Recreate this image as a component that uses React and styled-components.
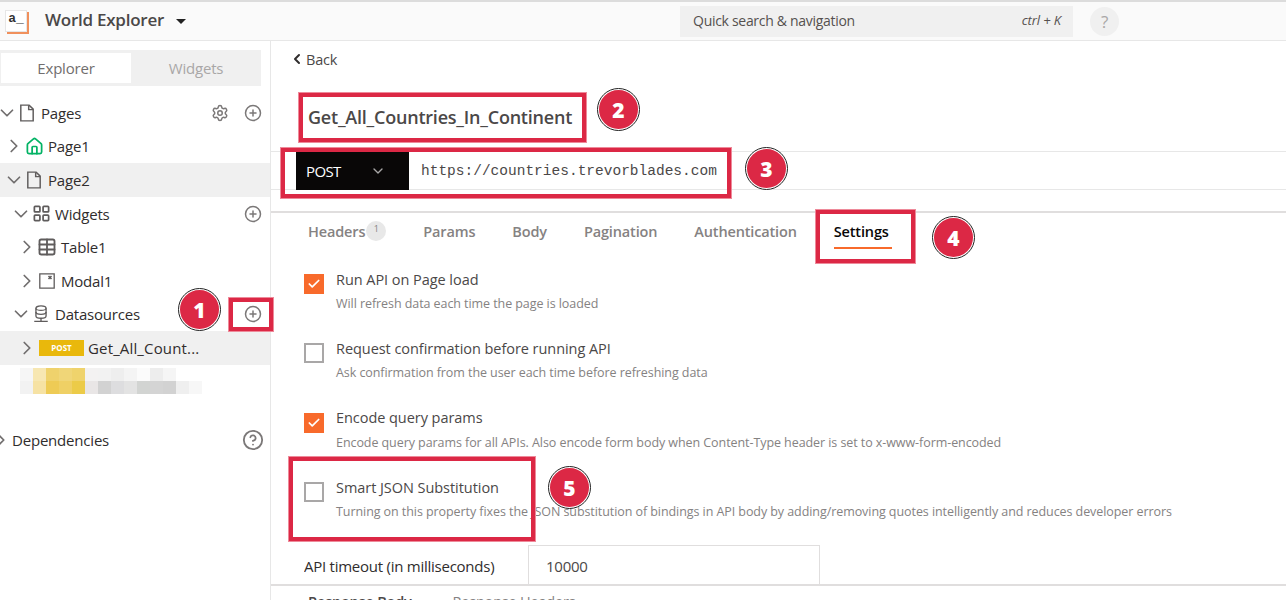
import React from 'react'
import styled, { createGlobalStyle } from 'styled-components'
import { ChevronDown, ChevronRight, ChevronLeft, CirclePlus, Settings as Gear, House, LayoutGrid, Table, CircleHelp, Check } from 'lucide-react'

const GlobalStyle = createGlobalStyle`
  html, body {
    margin: 0;
    height: 100%;
    overflow: hidden;
    background: #fff;
    font-family: 'Open Sans', sans-serif;
  }
`

const Page = styled.div`
  position: relative;
  width: 1286px;
  height: 600px;
  overflow: hidden;
  display: flex;
  flex-direction: column;
  border-top: 2px solid #dcdcdc;
  box-sizing: border-box;
`

// Top bar
const Header = styled.header`
  flex: none;
  height: 38px;
  box-sizing: content-box;
  display: flex;
  align-items: center;
  background: #fafafa;
  border-bottom: 1px solid #e7e7e7;
  padding-left: 5px;
`

const Logo = styled.div`
  width: 20px;
  height: 20px;
  background: #fff;
  border: 1px solid #e6e6e6;
  box-shadow: 2px 2px 0 #f0905c;
  font: 700 13px/16px 'Liberation Mono', monospace;
  color: #333;
  text-align: center;
`

const AppName = styled.div`
  margin: 0 0 3px 18px;
  font-size: 17px;
  font-weight: 600;
  letter-spacing: -0.25px;
  color: #4b4848;
`

const Caret = styled.div`
  margin-left: 12px;
  border-left: 5px solid transparent;
  border-right: 5px solid transparent;
  border-top: 5px solid #222;
`

const Search = styled.div`
  margin-left: 494px;
  width: 393px;
  height: 31px;
  padding: 0 12px 2px 13px;
  box-sizing: border-box;
  background: #f0f0f0;
  display: flex;
  align-items: center;
  justify-content: space-between;
  font-size: 14px;
  letter-spacing: -0.3px;
  color: #55504f;
`

const Shortcut = styled.span`
  font-size: 13px;
  font-style: italic;
  letter-spacing: -0.1px;
`

const HelpBubble = styled.div`
  margin-left: 17px;
  width: 29px;
  height: 29px;
  border-radius: 50%;
  background: #f0f0f0;
  color: #a9a7a7;
  font-size: 17px;
  display: flex;
  align-items: center;
  justify-content: center;
`

const Body = styled.div`
  flex: 1;
  min-height: 0;
  display: flex;
`

// Sidebar
const Sidebar = styled.aside`
  flex: none;
  width: 271px;
  box-sizing: border-box;
  border-right: 1px solid #e7e7e7;
  padding-top: 9px;
`

const TabSwitch = styled.div`
  width: 261px;
  height: 36px;
  box-sizing: border-box;
  padding: 3px 0 3px 1px;
  background: #f0f0f0;
  display: flex;
  margin-bottom: 10px;
`

const SwitchTab = styled.div`
  width: 130px;
  display: flex;
  align-items: center;
  justify-content: center;
  font-size: 15px;
  letter-spacing: -0.2px;
  color: ${(p) => (p.$active ? '#716e6e' : '#a9a7a7')};
  background: ${(p) => (p.$active ? '#fff' : 'transparent')};
`

const Row = styled.div`
  height: 33.6px;
  display: flex;
  align-items: center;
  padding-left: ${(p) => p.$indent}px;
  padding-right: 8px;
  background: ${(p) => (p.$active ? '#f0f0f0' : 'transparent')};
  color: #302d2d;
  font-size: 15px;
  letter-spacing: -0.2px;
  gap: 5px;
`

const Toggle = styled.span`
  flex: none;
  width: 14px;
  display: flex;
  justify-content: center;
  color: #716e6e;

  svg {
    flex: none;
  }
`

const RowIcon = styled.span`
  flex: none;
  width: 16px;
  display: flex;
  justify-content: center;
  color: ${(p) => p.$color || '#5f5c5c'};

  svg {
    flex: none;
  }
`

const RowLabel = styled.span`
  flex: 1;
  margin-left: 1px;
  white-space: nowrap;
`

const ActionName = styled(RowLabel)`
  letter-spacing: 0.15px;
`

const RowAction = styled.span`
  flex: none;
  display: flex;
  color: #7b7878;
  margin-left: ${(p) => p.$gap || 0}px;
`

const MethodTag = styled.span`
  flex: none;
  width: 45px;
  height: 16px;
  margin-right: -2px;
  background: #e9b80c;
  color: #fff;
  font-size: 8px;
  font-weight: 700;
  letter-spacing: 0;
  line-height: 16px;
  text-align: center;
`

const Mosaic = styled.div`
  margin: 3px 0 0 20px;
  width: 182px;
  display: grid;
  grid-template-columns: repeat(14, 13px);
  grid-auto-rows: 13px;
`

const Tile = styled.div`
  background: ${(p) => p.$color};
`

const Dependencies = styled(Row)`
  margin-top: 29px;
  padding-left: 0;
  padding-right: 6px;
  margin-left: -6px;
  gap: 3px;
`

// Main pane
const Main = styled.main`
  flex: 1;
  min-width: 0;
  display: flex;
  flex-direction: column;
`

const Back = styled.div`
  margin: 8px 0 0 18px;
  height: 20px;
  display: flex;
  align-items: center;
  gap: 1px;
  font-size: 14.5px;
  letter-spacing: -0.2px;
  color: #4b4848;
`

const Title = styled.h1`
  margin: 35px 0 0 37px;
  height: 26px;
  font-size: 18px;
  line-height: 26px;
  font-weight: 600;
  letter-spacing: -0.22px;
  color: #4b4848;
`

const UrlBar = styled.div`
  margin-top: 21px;
  height: 39px;
  box-sizing: border-box;
  border-top: 1px solid #e7e7e7;
  border-bottom: 1px solid #e7e7e7;
  padding-left: 25px;
  display: flex;
`

const Method = styled.div`
  width: 113px;
  height: 39px;
  margin-top: -1px;
  box-sizing: border-box;
  padding: 0 23px 0 10px;
  background: #090707;
  color: #fff;
  font-size: 15px;
  letter-spacing: -0.6px;
  display: flex;
  align-items: center;
  justify-content: space-between;
`

const Url = styled.div`
  margin-left: 12px;
  font: 14.5px/38px 'Liberation Mono', monospace;
  color: #4b4848;
`

const TabRow = styled.nav`
  margin-top: 21px;
  height: 50px;
  box-sizing: border-box;
  border-top: 2px solid #e0dede;
  padding-left: 37px;
  display: flex;
  gap: 37px;
`

const Tab = styled.div`
  display: flex;
  align-items: flex-start;
  height: 25px;
  padding: 9px ${(p) => (p.$active ? 3 : 0)}px 0 0;
  font-size: 14.5px;
  font-weight: 600;
  letter-spacing: -0.15px;
  color: ${(p) => (p.$active ? '#090707' : '#858282')};
  border-bottom: ${(p) => (p.$active ? '2px solid #f86a2b' : '2px solid transparent')};
`

const Count = styled.span`
  width: 20px;
  height: 20px;
  margin: -1px 0 0 1px;
  border-radius: 50%;
  background: #e8e8e8;
  color: #858282;
  font-size: 9px;
  font-weight: 400;
  text-align: center;
  line-height: 16px;
`

const Options = styled.div`
  flex: 1;
  min-height: 0;
  padding: 11px 0 0 33px;
`

const Option = styled.div`
  height: 69.4px;
  display: grid;
  grid-template-columns: 20px 1fr;
  column-gap: 12px;
`

const Box = styled.span`
  width: 20px;
  height: 20px;
  box-sizing: border-box;
  margin-top: 2px;
  display: flex;
  align-items: center;
  justify-content: center;
  color: #fff;
  background: ${(p) => (p.$on ? '#f86a2b' : '#fff')};
  border: ${(p) => (p.$on ? 'none' : '2px solid #a9a7a7')};
`

const OptionName = styled.div`
  margin-top: -1.5px;
  font-size: 14.5px;
  line-height: 17px;
  letter-spacing: -0.05px;
  color: #4b4848;
`

const OptionHint = styled.div`
  margin-top: 8.5px;
  font-size: 12.5px;
  line-height: 16px;
  letter-spacing: -0.07px;
  color: #858282;
  white-space: nowrap;
`

const Timeout = styled.div`
  margin: -7px 0 0 33px;
  height: 39px;
  display: flex;
  font-size: 15px;
  letter-spacing: -0.25px;
  color: #302d2d;
  overflow: hidden;
`

const TimeoutLabel = styled.div`
  width: 224px;
  line-height: 42px;
`

const TimeoutInput = styled.div`
  width: 292px;
  box-sizing: border-box;
  border: 1px solid #e0dede;
  border-bottom: none;
  padding-left: 17px;
  line-height: 40px;
  color: #4b4848;
`

const Response = styled.div`
  flex: none;
  height: 16px;
  box-sizing: border-box;
  border-top: 2px solid #e0dede;
  padding: 7px 0 0 37px;
  display: flex;
  gap: 41px;
  font-size: 14.5px;
  font-weight: 600;
  line-height: 18px;
  letter-spacing: -0.2px;
  color: #4b4848;
  overflow: hidden;
  white-space: nowrap;
`

const ResponseMuted = styled.span`
  font-weight: 400;
  color: #858282;
`

// Annotations drawn over the screenshot
const Mark = styled.div`
  position: absolute;
  left: ${(p) => p.$x}px;
  top: ${(p) => p.$y - 2}px;
  width: ${(p) => p.$w}px;
  height: ${(p) => p.$h}px;
  box-sizing: border-box;
  border: 5px solid #dc2845;
  outline: 1px solid #ee8a9a;
  outline-offset: -1px;
`

const Badge = styled.div`
  position: absolute;
  left: ${(p) => p.$x}px;
  top: ${(p) => p.$y - 2}px;
  width: 43px;
  height: 43px;
  box-sizing: border-box;
  border-radius: 50%;
  background: #dc2845;
  border: 2px solid #fff;
  outline: 1px solid #222;
  outline-offset: -1px;
  color: #fff;
  font-size: 21px;
  font-weight: 800;
  display: flex;
  align-items: center;
  justify-content: center;
`

const PageIcon = () => (
  <svg width="18" height="18" viewBox="0 0 16 16" fill="none" stroke="currentColor" strokeWidth="1.3">
    <path d="M2.5 1h7.4l3.6 3.6v10.4h-11z" />
    <path d="M9.5 1v4h4" />
  </svg>
)

const ModalIcon = () => (
  <svg width="16" height="16" viewBox="0 0 16 16" fill="none" stroke="currentColor">
    <path d="M.8.8h14.4v14.4H.8z" strokeWidth="1.3" />
    <path d="M9.5 3l3 3M12.5 3l-3 3" strokeWidth="1.6" />
  </svg>
)

const DatasourceIcon = () => (
  <svg width="18" height="18" viewBox="0 0 16 16" fill="none" stroke="currentColor" strokeWidth="1.2">
    <ellipse cx="8" cy="2.8" rx="4.5" ry="2" />
    <path d="M3.5 2.8v7c0 1 2 2 4.5 2s4.5-1 4.5-2v-7" />
    <path d="M3.5 6.3c0 1 2 2 4.5 2s4.5-1 4.5-2" />
    <path d="M8 11.8v2.4M2 14.5h12" />
  </svg>
)

const RowToggle = ({ open }) => (
  <Toggle>{open ? <ChevronDown size={22} strokeWidth={1.9} /> : <ChevronRight size={22} strokeWidth={1.9} />}</Toggle>
)

const mosaic = [
  '#f6f6f6', '#f7e7b2', '#efd26c', '#f0d678', '#efd36c', '#f3f2f2', '#f2f2f2', '#eeeeee', '#f4f4f4', '#fbfbfb', '#ededed', '#f5f5f5', '#ffffff', '#ffffff',
  '#f2f2f2', '#f6e2a4', '#eecb55', '#efd065', '#eccb48', '#e9e6e6', '#d2d2d2', '#dddddf', '#e3e3e3', '#d2d4d2', '#d4d4d4', '#d2d2d2', '#efefef', '#f7f7f7',
]

const options = [
  { name: 'Run API on Page load', hint: 'Will refresh data each time the page is loaded', on: true },
  { name: 'Request confirmation before running API', hint: 'Ask confirmation from the user each time before refreshing data' },
  { name: 'Encode query params', hint: 'Encode query params for all APIs. Also encode form body when Content-Type header is set to x-www-form-encoded', on: true },
  { name: 'Smart JSON Substitution', hint: 'Turning on this property fixes the JSON substitution of bindings in API body by adding/removing quotes intelligently and reduces developer errors' },
]

export default function App() {
  return (
    <Page>
      <GlobalStyle />
      <Header>
        <Logo>a_</Logo>
        <AppName>World Explorer</AppName>
        <Caret />
        <Search>
          <span>Quick search &amp; navigation</span>
          <Shortcut>ctrl + K</Shortcut>
        </Search>
        <HelpBubble>?</HelpBubble>
      </Header>
      <Body>
        <Sidebar>
          <TabSwitch>
            <SwitchTab $active>Explorer</SwitchTab>
            <SwitchTab>Widgets</SwitchTab>
          </TabSwitch>
          <Row $indent={0}>
            <RowToggle open />
            <RowIcon><PageIcon /></RowIcon>
            <RowLabel>Pages</RowLabel>
            <RowAction><Gear size={18} /></RowAction>
            <RowAction $gap={10}><CirclePlus size={18} /></RowAction>
          </Row>
          <Row $indent={7}>
            <RowToggle />
            <RowIcon $color="#03b365"><House size={19} strokeWidth={2.2} /></RowIcon>
            <RowLabel>Page1</RowLabel>
          </Row>
          <Row $indent={7} $active>
            <RowToggle open />
            <RowIcon><PageIcon /></RowIcon>
            <RowLabel>Page2</RowLabel>
          </Row>
          <Row $indent={14}>
            <RowToggle open />
            <RowIcon><LayoutGrid size={19} strokeWidth={2.2} /></RowIcon>
            <RowLabel>Widgets</RowLabel>
            <RowAction><CirclePlus size={18} /></RowAction>
          </Row>
          <Row $indent={20}>
            <RowToggle />
            <RowIcon><Table size={20} strokeWidth={2.2} /></RowIcon>
            <RowLabel>Table1</RowLabel>
          </Row>
          <Row $indent={20}>
            <RowToggle />
            <RowIcon><ModalIcon /></RowIcon>
            <RowLabel>Modal1</RowLabel>
          </Row>
          <Row $indent={14}>
            <RowToggle open />
            <RowIcon><DatasourceIcon /></RowIcon>
            <RowLabel>Datasources</RowLabel>
            <RowAction><CirclePlus size={18} /></RowAction>
          </Row>
          <Row $indent={20} $active>
            <RowToggle />
            <MethodTag>POST</MethodTag>
            <ActionName>Get_All_Count...</ActionName>
          </Row>
          <Mosaic>
            {mosaic.map((color, i) => <Tile key={i} $color={color} />)}
          </Mosaic>
          <Dependencies $indent={0}>
            <RowToggle />
            <RowLabel>Dependencies</RowLabel>
            <RowAction><CircleHelp size={22} /></RowAction>
          </Dependencies>
        </Sidebar>
        <Main>
          <Back><ChevronLeft size={16} strokeWidth={3} color="#302d2d" />Back</Back>
          <Title>Get_All_Countries_In_Continent</Title>
          <UrlBar>
            <Method>POST<ChevronDown size={16} color="#a9a7a7" /></Method>
            <Url>https://countries.trevorblades.com</Url>
          </UrlBar>
          <TabRow>
            <Tab>Headers<Count>1</Count></Tab>
            <Tab>Params</Tab>
            <Tab>Body</Tab>
            <Tab>Pagination</Tab>
            <Tab>Authentication</Tab>
            <Tab $active>Settings</Tab>
          </TabRow>
          <Options>
            {options.map((o) => (
              <Option key={o.name}>
                <Box $on={o.on}>{o.on && <Check size={14} strokeWidth={3} />}</Box>
                <div>
                  <OptionName>{o.name}</OptionName>
                  <OptionHint>{o.hint}</OptionHint>
                </div>
              </Option>
            ))}
          </Options>
          <Timeout>
            <TimeoutLabel>API timeout (in milliseconds)</TimeoutLabel>
            <TimeoutInput>10000</TimeoutInput>
          </Timeout>
          <Response>
            <span>Response Body</span>
            <ResponseMuted>Response Headers</ResponseMuted>
          </Response>
        </Main>
      </Body>
      <Mark $x={228} $y={297} $w={46} $h={35} />
      <Mark $x={298} $y={92} $w={289} $h={51} />
      <Mark $x={280} $y={147} $w={452} $h={52} />
      <Mark $x={815} $y={209} $w={101} $h={55} />
      <Mark $x={288} $y={456} $w={248} $h={86} />
      <Badge $x={178} $y={288}>1</Badge>
      <Badge $x={597} $y={88}>2</Badge>
      <Badge $x={745} $y={147}>3</Badge>
      <Badge $x={932} $y={216}>4</Badge>
      <Badge $x={548} $y={466}>5</Badge>
    </Page>
  )
}
